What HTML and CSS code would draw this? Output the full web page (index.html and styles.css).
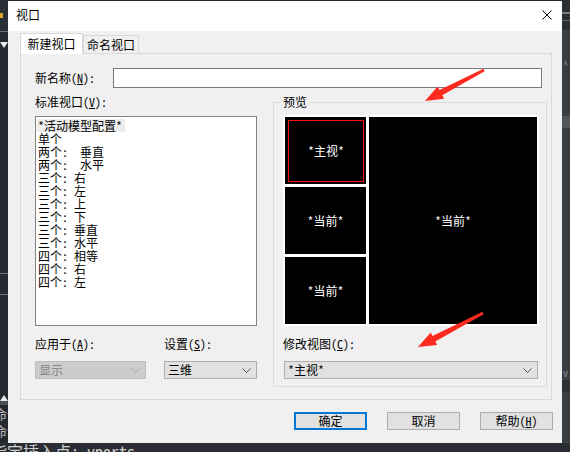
FILE: index.html
```html
<!DOCTYPE html>
<html lang="zh-CN">
<head>
<meta charset="utf-8">
<title>视口</title>
<link rel="stylesheet" href="styles.css">
</head>
<body>
<div class="desk">
  <div class="strip-left">
    <div class="ls-top"><span class="ls-icon"></span></div>
    <div class="ls-sep"></div>
    <div class="ls-tri-down"></div>
    <div class="ls-fill"></div>
    <div class="ls-sep"></div>
    <div class="ls-gap"></div>
    <div class="ls-sep"></div>
    <div class="ls-fill2"></div>
    <div class="ls-tri-up"></div>
    <div class="ls-bar"></div>
    <div class="ls-hist">
      <div class="ls-line">命令:</div>
      <div class="ls-line">命令:</div>
    </div>
  </div>

  <div class="dialog">
    <div class="titlebar">
      <span class="title">视口</span>
      <svg class="close" viewBox="0 0 10 10" width="10" height="10"><path d="M0.5 0.5 L9.5 9.5 M9.5 0.5 L0.5 9.5" stroke="#000" stroke-width="1" fill="none"/></svg>
    </div>
    <div class="dbody">
      <div class="tabs">
        <div class="tab active">新建视口</div>
        <div class="tab">命名视口</div>
      </div>
      <div class="panel">
        <div class="name-row">
          <span class="name-label">新名称(<u>N</u>):</span>
          <div class="textbox"></div>
        </div>
        <div class="main">
          <div class="leftcol">
            <div class="lbl">标准视口(<u>V</u>):</div>
            <ul class="listbox">
              <li class="sel">*活动模型配置*</li>
              <li>单个</li>
              <li>两个:  垂直</li>
              <li>两个:  水平</li>
              <li>三个: 右</li>
              <li>三个: 左</li>
              <li>三个: 上</li>
              <li>三个: 下</li>
              <li>三个: 垂直</li>
              <li>三个: 水平</li>
              <li>四个: 相等</li>
              <li>四个: 右</li>
              <li>四个: 左</li>
            </ul>
            <div class="opts">
              <div class="opt opt-apply">
                <div class="lbl">应用于(<u>A</u>):</div>
                <div class="select disabled"><span>显示</span><svg class="chev" viewBox="0 0 9 5" width="9" height="5"><polyline points="0.5,0.5 4.5,4.5 8.5,0.5" fill="none" stroke="#a8a8a8" stroke-width="1"/></svg></div>
              </div>
              <div class="opt opt-set">
                <div class="lbl">设置(<u>S</u>):</div>
                <div class="select"><span>三维</span><svg class="chev" viewBox="0 0 9 5" width="9" height="5"><polyline points="0.5,0.5 4.5,4.5 8.5,0.5" fill="none" stroke="#555" stroke-width="1"/></svg></div>
              </div>
            </div>
          </div>
          <fieldset class="group">
            <legend>预览</legend>
            <div class="preview">
              <div class="vp vp-main"><div class="vp-frame">*主视*</div></div>
              <div class="vp vp-big">*当前*</div>
              <div class="vp">*当前*</div>
              <div class="vp">*当前*</div>
            </div>
            <div class="lbl">修改视图(<u>C</u>):</div>
            <div class="select wide"><span>*主视*</span><svg class="chev" viewBox="0 0 9 5" width="9" height="5"><polyline points="0.5,0.5 4.5,4.5 8.5,0.5" fill="none" stroke="#555" stroke-width="1"/></svg></div>
          </fieldset>
        </div>
      </div>
      <div class="buttons">
        <div class="btn default">确定</div>
        <div class="btn">取消</div>
        <div class="btn">帮助(<u>H</u>)</div>
      </div>
    </div>
  </div>

  <div class="strip-right">
    <div class="rs-top"><div class="rs-bar"></div><div class="rs-bar2"></div></div>
    <div class="rs-chev">^</div>
    <div class="rs-block"></div>
    <div class="rs-mid"></div>
    <div class="rs-chev down">v</div>
    <div class="rs-dark"></div>
  </div>
</div>
<div class="cmdline">指定插入点: vports</div>

<svg class="annot" width="570" height="452" viewBox="0 0 570 452">
  <polygon points="425,101 437.6,86.4 439.5,89.9 483.5,68.8 484.6,71.2 442.3,95.3 444.2,98.8" fill="#ff2a1f"/>
  <polygon points="418,347 430.7,332.5 432.5,336 482.5,311.8 483.6,314.2 435.3,341.4 437.1,344.9" fill="#ff2a1f"/>
</svg>
</body>
</html>
```

FILE: styles.css
```css
* { box-sizing: border-box; }
html, body { margin: 0; padding: 0; }
body {
  width: 570px;
  height: 452px;
  overflow: hidden;
  position: relative;
  background: #23262c;
  font-family: "Noto Sans Mono CJK SC", "Noto Sans CJK SC", sans-serif;
  font-size: 12px;
  color: #000;
}

.desk { display: flex; height: 443px; }

/* left background strip */
.strip-left { width: 8px; display: flex; flex-direction: column; background: #252930; overflow: hidden; }
.ls-top { height: 31px; padding-top: 13px; background: #2a2e35; }
.ls-icon { display: block; width: 3px; height: 5px; background: #d9a520; }
.ls-sep { height: 1px; background: #6c7077; }
.ls-tri-down { width: 0; height: 0; margin: 10px 0 0 0; border-left: 4px solid transparent; border-right: 4px solid transparent; border-top: 6px solid #e8e8e8; }
.ls-fill { height: 225px; }
.ls-gap { height: 20px; }
.ls-fill2 { height: 100px; }
.ls-tri-up { width: 0; height: 0; border-left: 4px solid transparent; border-right: 4px solid transparent; border-bottom: 6px solid #e8e8e8; }
.ls-bar { height: 4px; background: #4a4e55; }
.ls-hist { flex: 1; color: #bfbfbf; font-size: 13px; }
.ls-line { line-height: 17px; margin-left: -6px; white-space: nowrap; }

/* right background strip */
.strip-right { width: 8px; display: flex; flex-direction: column; background: #3a3d44; overflow: hidden; }
.rs-top { height: 30px; background: #2b2e34; padding-top: 12px; }
.rs-bar { height: 2px; background: #7a7e85; }
.rs-bar2 { height: 1px; margin-top: 6px; background: #5a5e65; }
.rs-chev { color: #8a8e95; font-size: 10px; line-height: 10px; margin-top: 30px; text-indent: 1px; }
.rs-block { height: 12px; margin-top: 46px; background: #51555c; }
.rs-mid { height: 240px; }
.rs-chev.down { margin-top: 0; }
.rs-dark { height: 12px; margin-top: 2px; background: #2e3136; }

/* dialog */
.dialog {
  width: 554px;
  height: 442px;
  margin-top: 1px;
  display: flex;
  flex-direction: column;
  background: #f0f0f0;
}
.titlebar {
  height: 30px;
  background: #fff;
  display: flex;
  align-items: center;
  justify-content: space-between;
  padding: 0 10px 2px 8px;
}
.title { font-family: "Noto Sans CJK SC", sans-serif; font-size: 12px; line-height: 14px; }
.close { display: block; }

.dbody { flex: 1; padding: 2px 10px 0 12px; }

.tabs { display: flex; align-items: flex-end; height: 20px; }
.tab {
  width: 56px;
  height: 18px;
  border: 1px solid #d9d9d9;
  border-bottom: none;
  background: #f0f0f0;
  display: flex;
  align-items: center;
  justify-content: center;
  line-height: 14px;
  padding-top: 1px;
}
.tab.active {
  width: 63px;
  height: 21px;
  margin-bottom: -1px;
  background: #fff;
  position: relative;
  z-index: 1;
  padding-top: 0;
}

.panel {
  width: 532px;
  height: 347px;
  border: 1px solid #d9d9d9;
  padding: 14px 4px 0 14px;
}

.name-row { display: flex; align-items: center; height: 20px; }
.name-label { width: 78px; line-height: 14px; }
.textbox { width: 429px; height: 20px; border: 1px solid #7a7a7a; background: #fff; }

.main {
  display: grid;
  grid-template-columns: 222px 274px;
  column-gap: 16px;
  margin-top: 7px;
  align-items: start;
}

.lbl { line-height: 14px; height: 14px; white-space: nowrap; }

.listbox {
  list-style: none;
  margin: 7px 0 0 0;
  padding: 2px 0 0 1px;
  height: 210px;
  border: 1px solid #828282;
  background: #fff;
}
.listbox li { line-height: 13px; height: 13px; white-space: pre; padding-left: 1px; }
.listbox li.sel { background: #ececec; width: fit-content; padding-right: 3px; }

.opts { display: flex; gap: 18px; margin-top: 11px; }
.opt-apply { width: 111px; }
.opt-set { width: 93px; }

.select {
  height: 18px;
  margin-top: 10px;
  border: 1px solid #adadad;
  background: #e1e1e1;
  display: flex;
  align-items: center;
  justify-content: space-between;
  padding: 0 5px 0 3px;
  line-height: 14px;
}
.select.disabled { background: #cccccc; border-color: #bfbfbf; color: #838383; }
.select.wide { width: 254px; margin-left: 1px; }
.chev { display: block; }

.group {
  margin: 0;
  min-width: 0;
  border: 1px solid #dcdcdc;
  padding: 6px 7px 7px 9px;
}
.group legend {
  padding: 0 2px;
  margin-left: -2px;
  line-height: 14px;
  font-size: 12px;
}

.preview {
  width: 256px;
  height: 211px;
  background: #fff;
  padding: 2px;
  display: grid;
  grid-template-columns: 81px 168px;
  grid-template-rows: 67px 67px 67px;
  gap: 3px;
  margin-bottom: 11px;
}
.vp {
  background: #000;
  color: #fff;
  display: flex;
  align-items: center;
  justify-content: center;
  line-height: 14px;
}
.vp-big { grid-column: 2; grid-row: 1 / 4; }
.vp-main { padding: 3px 2px 2px 3px; align-items: stretch; justify-content: stretch; }
.vp-frame {
  flex: 1;
  border: 1px solid #ff1010;
  display: flex;
  align-items: center;
  justify-content: center;
}

.buttons {
  display: flex;
  justify-content: flex-end;
  gap: 20px;
  margin: 12px -1px 0 0;
}
.btn {
  width: 73px;
  height: 18px;
  border: 1px solid #adadad;
  background: #e1e1e1;
  display: flex;
  align-items: center;
  justify-content: center;
  line-height: 14px;
}
.btn.default { border: 2px solid #0078d7; }

.cmdline {
  height: 9px;
  overflow: hidden;
  background: #2a2d33;
  color: #d2d2d2;
  font-size: 16px;
  line-height: 17px;
  white-space: pre;
  text-indent: -9px;
}
.cmdline, .ls-line { padding-top: 0; }

.annot { position: absolute; left: 0; top: 0; pointer-events: none; }
```
